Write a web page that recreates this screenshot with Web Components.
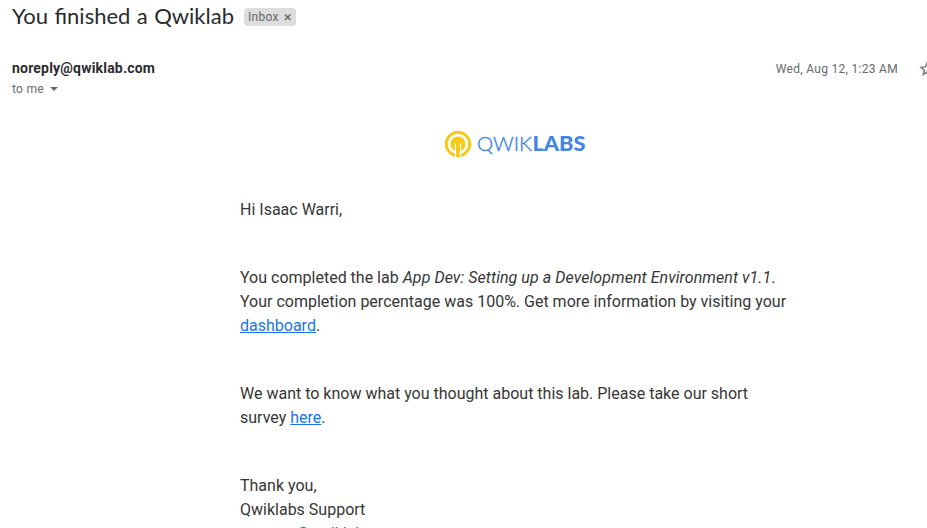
<!DOCTYPE html>
<html lang="en"><head><meta charset="utf-8"><title>You finished a Qwiklab</title>
<style>
html,body{margin:0;height:528px;overflow:hidden;background:#fff}
body{font-family:Roboto,"Liberation Sans",sans-serif;color:#222}
</style></head><body>
<mail-view></mail-view>
<script>
const define=(name,html)=>customElements.define(name,class extends HTMLElement{
 constructor(){super();this.attachShadow({mode:'open'}).innerHTML=html;}
});
define('label-chip',`<style>
:host{display:flex;align-items:center;box-sizing:border-box;width:52px;height:18px;padding-left:4px;border-radius:4px;background:#ddd;color:#666;font-size:12px;line-height:18px;letter-spacing:.3px}
svg{margin-left:5px;flex:none}</style><slot></slot>
<svg width="8" height="8" viewBox="0 0 8 8"><path d="M1 1.5l5.5 5.5M6.5 1.5l-5.5 5.5" stroke="#666" stroke-width="1.5"/></svg>`);
define('mail-subject',`<style>
:host{display:flex;height:34px;padding-left:12px;align-items:center;box-sizing:border-box}
h1{margin:-1px 0 1px;font:400 22px/28px "Google Sans",Lato,sans-serif;color:#292a2d;width:232px;white-space:nowrap;word-spacing:.8px}
</style><h1><slot></slot></h1><slot name="label"></slot>`);
define('star-button',`<style>:host{display:block;width:8px;height:20px;overflow:hidden}svg{display:block}</style>
<svg width="20" height="20" viewBox="0 0 20 20"><path d="M8.1 4.9l1.8 4 4.4.4-3.3 2.9 1 4.3-3.9-2.3-3.8 2.3 1-4.3-3.3-2.9 4.4-.4z" fill="none" stroke="#777" stroke-width="1.5"/></svg>`);
define('mail-header',`<style>
:host{display:grid;grid-template-columns:1fr auto 8px;grid-template-rows:20px 20px;align-content:start;padding:24px 0 0 12px;height:72px;box-sizing:border-box}
.from{font-size:14px;font-weight:700;line-height:20px;letter-spacing:.2px;color:#2b2c2f}
.date,.to{font-size:12px;line-height:20px;letter-spacing:.3px;color:#666a6e}
.date{margin-right:21px;line-height:22px}.to{grid-column:1/-1;display:flex;align-items:center;gap:6px;padding-top:2px;height:18px}
</style><span class="from"><slot name="from"></slot></span><span class="date"><slot name="date"></slot></span><star-button></star-button>
<span class="to"><slot name="to"></slot><svg width="8" height="4" viewBox="0 0 8 4"><path d="M0 0h8L4 4z" fill="#666"/></svg></span>`);
define('qwik-logo',`<style>:host{display:block;height:30px;margin-left:444px}svg{display:block}text{font-family:Lato,sans-serif;fill:#4285e5}</style>
<svg width="144" height="30" viewBox="0 0 144 30"><circle cx="14" cy="15" r="11.7" fill="none" stroke="#f4cb16" stroke-width="3"/><circle cx="14" cy="15" r="7.6" fill="#f4cb16"/><path d="M11.5 14.5v13.5M16.5 14.5v13.5" stroke="#fff" stroke-width="1.3"/><path d="M12.2 14v14h3.6V14z" fill="#f4cb16"/>
<text x="33" y="21.5" font-size="20" stroke="#4285e5" stroke-width=".4" font-weight="300" textLength="55" lengthAdjust="spacingAndGlyphs">QWIK</text><text x="88.5" y="21.5" font-size="20" font-weight="900" textLength="53" lengthAdjust="spacingAndGlyphs">LABS</text></svg>`);
define('mail-text',`<style>:host{display:block;width:560px;margin-left:240px;padding-top:53px;font-size:16px;line-height:24px;color:#363636}
</style><slot></slot>`);
define('mail-view',`<style>:host{display:block;width:927px;height:528px;overflow:hidden}a{color:#1a73e8;text-decoration:underline}em{letter-spacing:.06px}qwik-logo{margin-top:23px}mail-text{margin-top:-14px}p{margin:0 0 44px;white-space:nowrap}p:last-child{margin:0}</style>
<mail-subject>You finished a Qwiklab<label-chip slot="label">Inbox</label-chip></mail-subject>
<mail-header><span slot="from">noreply@qwiklab.com</span><span slot="date">Wed, Aug 12, 1:23 AM</span><span slot="to">to me</span></mail-header>
<qwik-logo></qwik-logo>
<mail-text><p>Hi Isaac Warri,</p><p>You completed the lab <em>App Dev: Setting up a Development Environment v1.1</em>.<br>Your completion percentage was 100%. Get more information by visiting your<br><a>dashboard</a>.</p><p>We want to know what you thought about this lab. Please take our short<br>survey <a>here</a>.</p><p>Thank you,<br>Qwiklabs Support<br><a>support@qwiklab.com</a></p></mail-text>`);
</script></body></html>
